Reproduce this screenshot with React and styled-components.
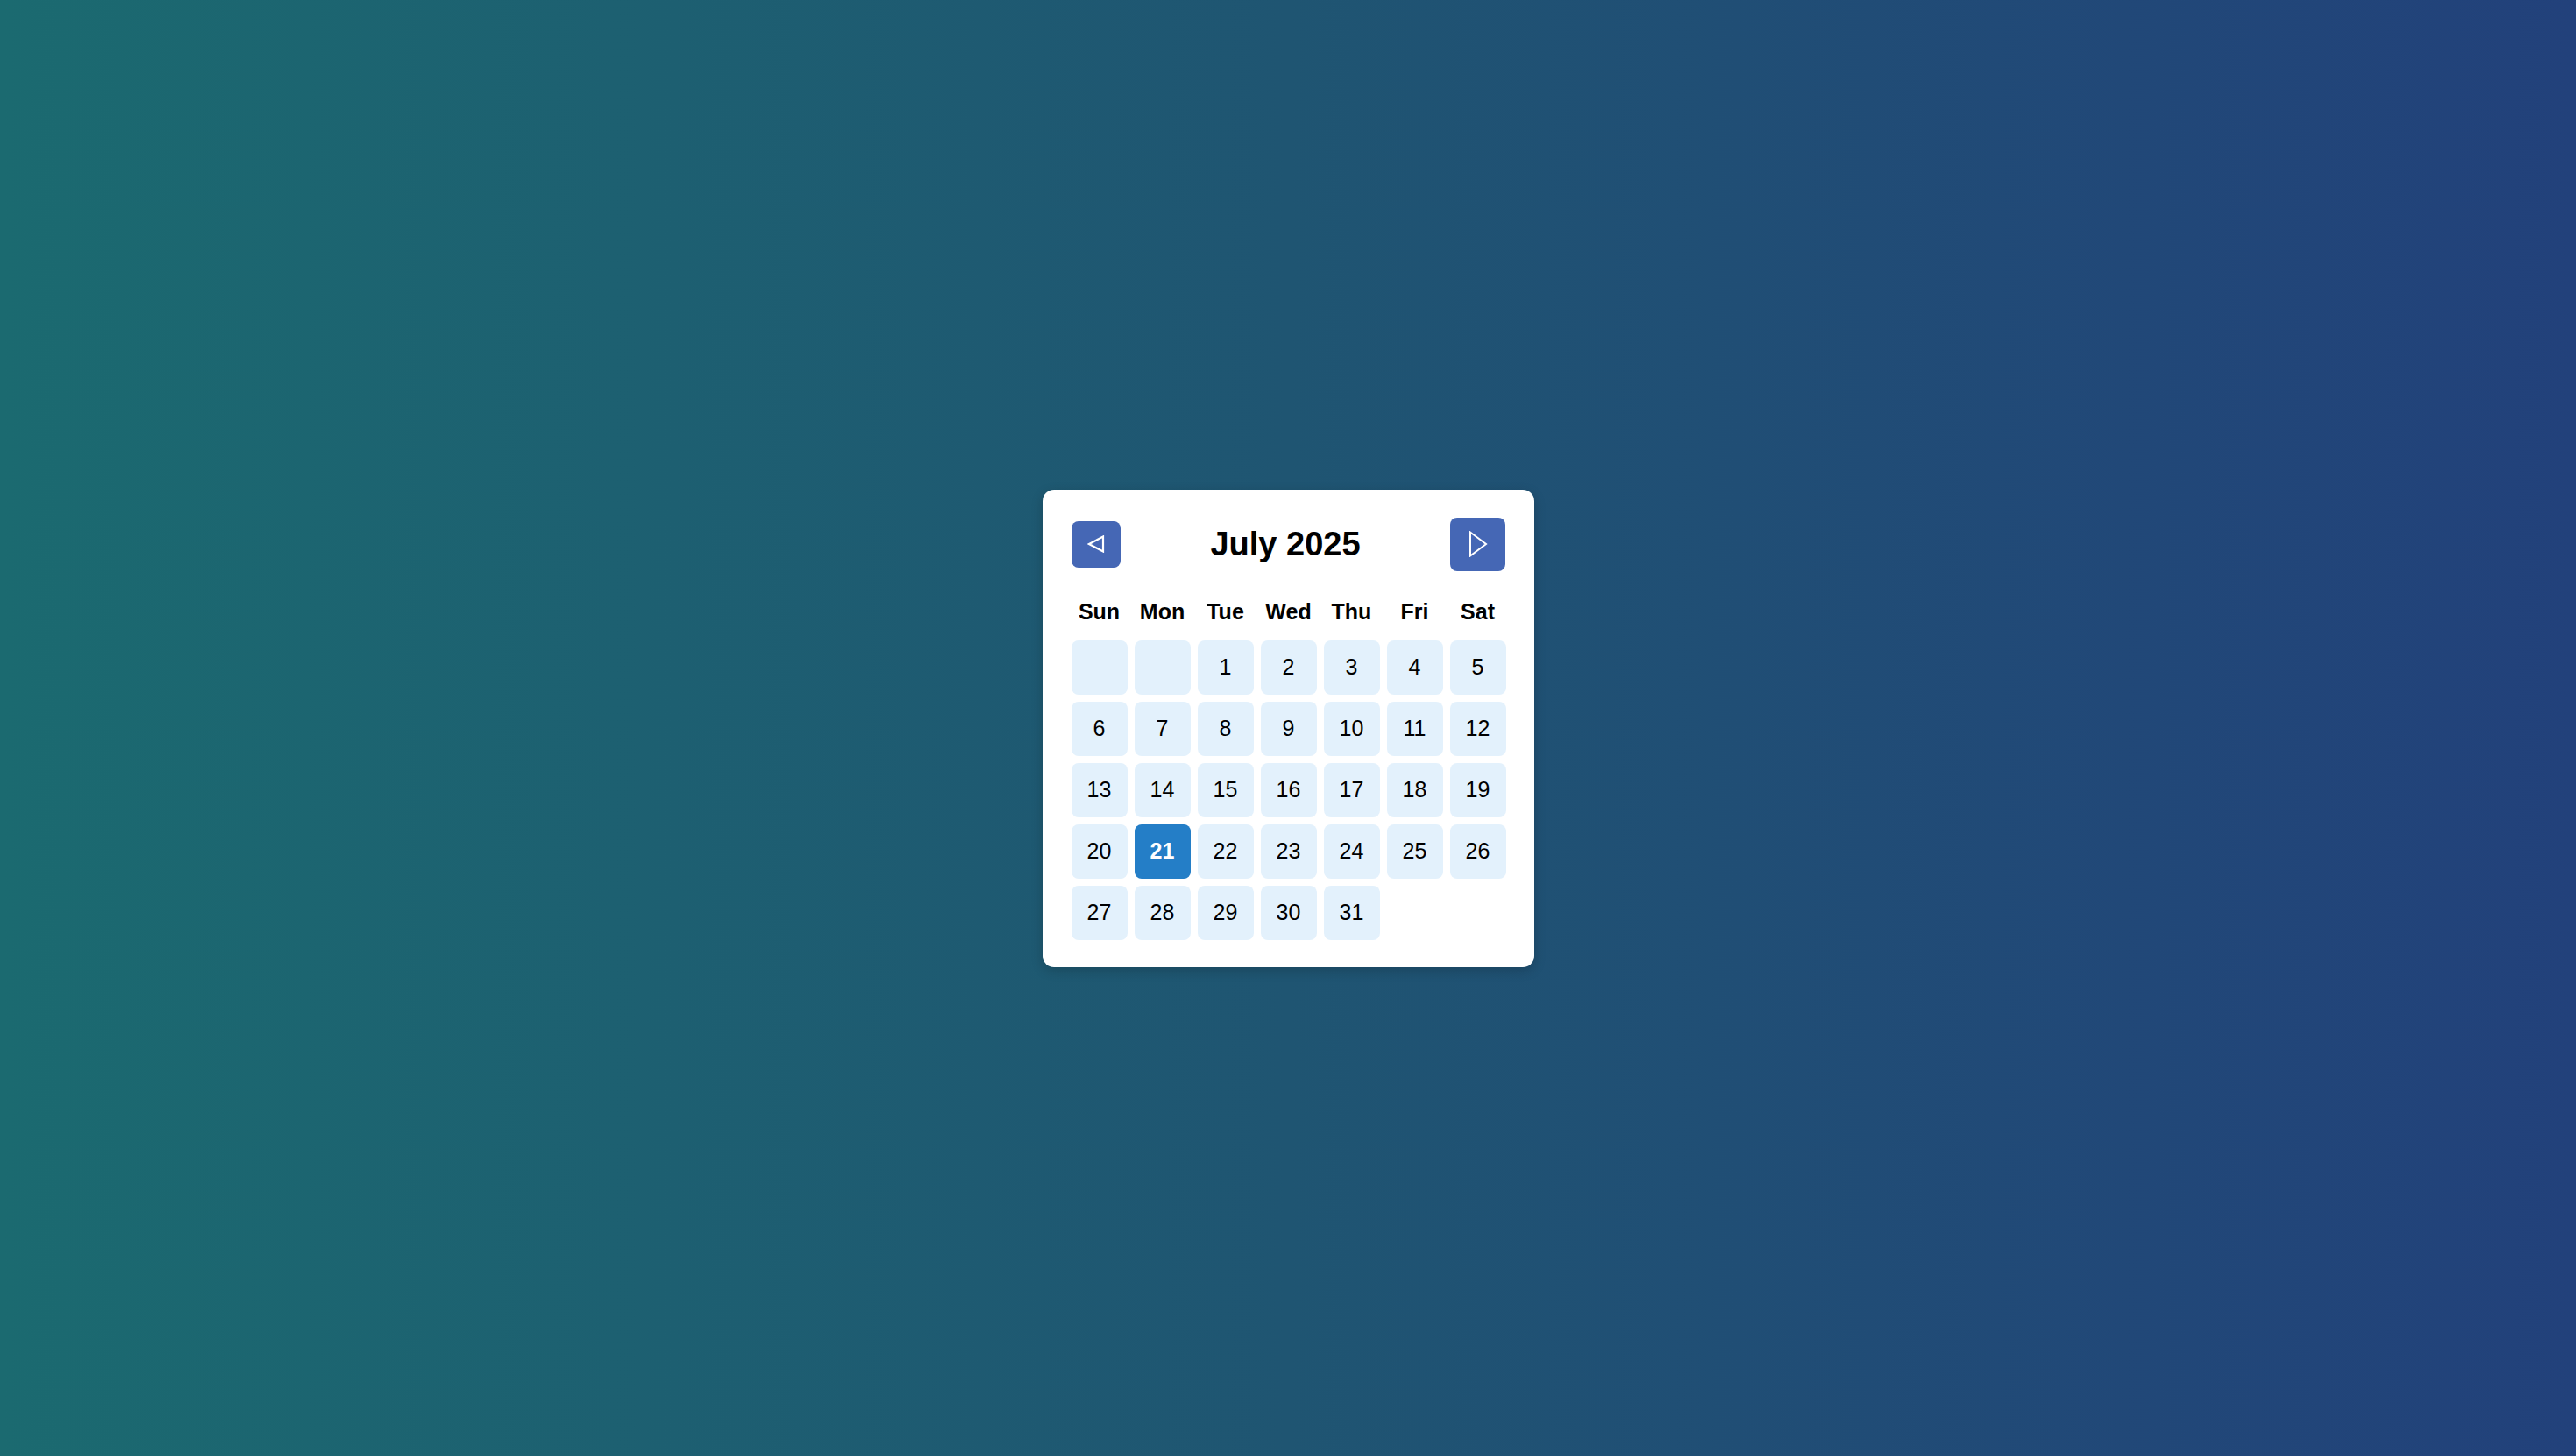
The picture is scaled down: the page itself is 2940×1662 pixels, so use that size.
import React, { useState } from 'react'
import styled, { createGlobalStyle } from 'styled-components'

const GlobalStyle = createGlobalStyle`
  * { box-sizing: border-box; }
  html, body {
    margin: 0;
    padding: 0;
  }
  body {
    font-family: "Liberation Sans", Arial, Helvetica, sans-serif;
  }
`

const WEEKDAYS = ['Sun', 'Mon', 'Tue', 'Wed', 'Thu', 'Fri', 'Sat']

function Calendar() {
  const [year] = useState(2025)
  const [month] = useState(6) // July
  const [selected, setSelected] = useState(21)

  const firstDay = new Date(year, month, 1).getDay()
  const total = new Date(year, month + 1, 0).getDate()
  const cells = []
  for (let i = 0; i < firstDay; i++) cells.push(null)
  for (let d = 1; d <= total; d++) cells.push(d)

  return (
    <Card>
      <Header>
        <NavButton $w={56} $h={53} aria-label="Previous month">
          <svg width="20" height="20" viewBox="0 0 20 20">
            <polygon points="2,10 18,1.5 18,18.5" fill="none" stroke="#fff" strokeWidth="2.2" strokeLinejoin="miter" />
          </svg>
        </NavButton>
        <Title>July 2025</Title>
        <NavButton $w={63} $h={61} aria-label="Next month">
          <svg width="22" height="30" viewBox="0 0 22 30">
            <polygon points="2,1.5 20,15 2,28.5" fill="none" stroke="#fff" strokeWidth="2" strokeLinejoin="miter" />
          </svg>
        </NavButton>
      </Header>

      <WeekRow>
        {WEEKDAYS.map((w) => (
          <WeekDay key={w}>{w}</WeekDay>
        ))}
      </WeekRow>

      <DayGrid>
        {cells.map((d, i) => (
          <Day
            key={i}
            $active={d === selected}
            onClick={() => d && setSelected(d)}
          >
            {d}
          </Day>
        ))}
      </DayGrid>
    </Card>
  )
}

export default function App() {
  return (
    <>
      <GlobalStyle />
      <Page>
        <Calendar />
      </Page>
    </>
  )
}

const Page = styled.div`
  min-height: 100vh;
  display: flex;
  align-items: center;
  justify-content: center;
  background: linear-gradient(90deg, #1b6a70 0%, #1f5572 50%, #22417b 100%);
`

const Card = styled.div`
  background: #ffffff;
  border-radius: 13px;
  padding: 32px 32px 31px 33px;
  box-shadow: 0 4px 14px rgba(0, 0, 0, 0.18);
`

const Header = styled.div`
  display: flex;
  align-items: center;
  justify-content: space-between;
  margin-bottom: 32px;
`

const NavButton = styled.button`
  width: ${(p) => p.$w}px;
  height: ${(p) => p.$h}px;
  display: flex;
  align-items: center;
  justify-content: center;
  padding: 0;
  border: none;
  border-radius: 8px;
  background: #4567b5;
  cursor: pointer;
  svg {
    display: block;
  }
`

const Title = styled.h2`
  margin: 0;
  font-size: 38px;
  font-weight: 700;
  color: #000;
`

const WeekRow = styled.div`
  display: grid;
  grid-template-columns: repeat(7, 64px);
  column-gap: 8px;
  margin-bottom: 18px;
`

const WeekDay = styled.div`
  text-align: center;
  font-size: 25px;
  font-weight: 700;
  color: #000;
`

const DayGrid = styled.div`
  display: grid;
  grid-template-columns: repeat(7, 64px);
  grid-auto-rows: 62px;
  gap: 8px;
`

const Day = styled.div`
  display: flex;
  align-items: center;
  justify-content: center;
  border-radius: 8px;
  font-size: 25px;
  font-weight: ${(p) => (p.$active ? 700 : 400)};
  color: ${(p) => (p.$active ? '#fff' : '#000')};
  background: ${(p) => (p.$active ? '#247ec7' : '#e3f1fc')};
  cursor: pointer;
`
